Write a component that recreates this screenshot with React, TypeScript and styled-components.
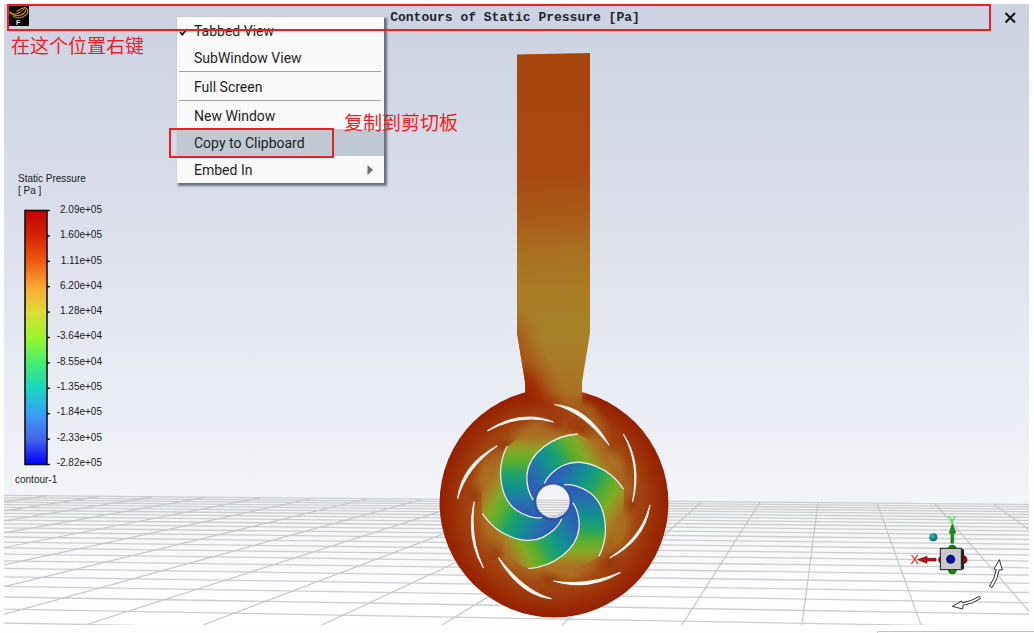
import React from 'react';
import styled, { createGlobalStyle } from 'styled-components';

const RED = '#ee1c25';
const UI_FONT = 'Roboto, "Noto Sans", sans-serif';
const CJK_FONT = '"Noto Sans CJK SC", sans-serif';

const GlobalStyle = createGlobalStyle`
  *, *::before, *::after { box-sizing: border-box; }
  body { margin: 0; background: #ffffff; }
`;

const Page = styled.div`
  display: flex;
  flex-direction: column;
  min-height: 100vh;
  padding-top: 4px;
  background: #fefefe;
`;

const Viewport = styled.main`
  position: relative;
  display: flex;
  flex: 1;
  flex-direction: column;
  margin: 0 5px 0 4px;
  background: linear-gradient(#ccd2e2 0%, #d9dde9 30%, #e9ebf3 60%, #f3f4f9 80%, #fafafd 90%, #ffffff 98%);
`;

const SceneSvg = styled.svg`
  position: absolute;
  inset: 0;
  width: 100%;
  height: 100%;
`;

const TitleRow = styled.header`
  display: flex;
  height: 27px;
  padding-left: 3px;
`;

const TitleStrip = styled.div`
  position: relative;
  z-index: 3;
  display: flex;
  flex: 1;
  align-items: center;
  gap: 12px;
  border: 2px solid ${RED};
  pointer-events: none;
`;

const AppLogo = styled.svg`
  width: 20px;
  height: 20px;
  align-self: flex-start;
`;

const Title = styled.h1`
  flex: 1;
  margin: 0;
  color: #20262e;
  font: bold 13px/20px "Liberation Mono", monospace;
  text-align: center;
`;

const CloseButton = styled.button`
  position: relative;
  display: flex;
  width: 38px;
  align-items: center;
  justify-content: center;
  padding: 0;
  border: 0;
  background: transparent;
`;

const Note = styled.p<{ $left: number; $top: number }>`
  position: absolute;
  z-index: 4;
  left: ${(p) => p.$left}px;
  top: ${(p) => p.$top}px;
  margin: 0;
  color: ${RED};
  font: 19px/28px ${CJK_FONT};
  white-space: nowrap;
`;

const Menu = styled.div`
  position: absolute;
  z-index: 2;
  left: 173px;
  top: 13px;
  width: 207px;
  background: #f9f9f9;
  box-shadow: 2px 2px 2px 1px rgba(70, 78, 92, 0.75);
`;

const MenuItem = styled.button<{ $active?: boolean }>`
  position: relative;
  display: flex;
  width: 100%;
  height: 27px;
  align-items: center;
  padding: 0 11px 0 17px;
  border: 0;
  background: ${(p) => (p.$active ? '#bfc9d3' : 'transparent')};
  color: #1e1e1e;
  font: 14px/20px ${UI_FONT};
  text-align: left;
`;

const MenuLabel = styled.span`
  flex: 1;
`;

const CheckIcon = styled.svg`
  position: absolute;
  left: 2px;
  top: 11px;
  width: 9px;
  height: 8px;
`;

const Separator = styled.hr`
  height: 2px;
  margin: 0 3px 0 2px;
  border: 0;
  border-top: 1px solid #a2a2a2;
`;

const Highlight = styled.span`
  position: absolute;
  left: -8px;
  top: -1px;
  width: 165px;
  height: 30px;
  border: 2px solid ${RED};
`;

const Legend = styled.section`
  position: relative;
  display: flex;
  flex-direction: column;
  width: 112px;
  margin-top: 142px;
  padding-left: 11px;
  color: #1a1a1a;
  font: 10px/12px "Liberation Sans", sans-serif;
`;

const LegendTitle = styled.div`
  padding-left: 3px;
  white-space: pre-line;
`;

const Scale = styled.div`
  display: flex;
  justify-content: space-between;
  margin: 7px 14px 5px 9px;
`;

const Bar = styled.svg`
  width: 26px;
  height: 257px;
  margin-top: 5px;
`;

const Values = styled.ol`
  display: flex;
  height: 265px;
  flex-direction: column;
  justify-content: space-between;
  margin: 0;
  padding: 0;
  list-style: none;
  text-align: right;
`;

const Triad = styled.svg`
  position: absolute;
  right: 19px;
  bottom: 12px;
  width: 110px;
  height: 100px;
`;

const Footer = styled.footer`
  display: flex;
  height: 8px;
  align-items: flex-end;
  justify-content: flex-end;
`;

const PanelEdge = styled.div`
  width: 157px;
  height: 2px;
  border-top: 1px solid #b9c3cd;
  border-left: 1px solid #b9c3cd;
  border-top-left-radius: 3px;
`;

const legendValues = [
  '2.09e+05', '1.60e+05', '1.11e+05', '6.20e+04', '1.28e+04', '-3.64e+04',
  '-8.55e+04', '-1.35e+05', '-1.84e+05', '-2.33e+05', '-2.82e+05',
];

const legendColors = [
  '#c40000', '#d62200', '#ee5a10', '#fda733', '#dcdc38', '#9bf52c',
  '#45ee72', '#16d6c0', '#3aa0f8', '#4466ea', '#0000ff',
];

/* Floor lines running across the view, nearest first. */
const crossLines = Array.from({ length: 24 }, (_, n) => {
  const y = 420 + 1 / (1 / 203 + n * 0.000362);
  const slope = 0.0088 + (y - 495.5) * 0.000079;
  return { y1: y, y2: y + slope * 1025 };
});

/* Floor lines running towards the horizon: [x at horizon, x at bottom edge]. */
const depthLines: [number, number][] = [
  [47, -875], [100, -755], [152, -635], [205, -515], [260, -395], [313, -275], [367, -155],
  [422, -35], [477, 85], [532, 203], [588, 322], [645, 442], [702, 562], [760, 682],
  [818, 802], [877, 921], [935, 1041], [994, 1160],
];

const blade = 'M24.7 -67.3 C0 -66 -24 -48 -26 -27 C-27 -17 -24 -7 -19.7 -1.3';
const passage =
  'M24.7 -67.3 C0 -66 -24 -48 -26 -27 C-27 -17 -24 -7 -19.7 -1.3 A19.7 19.7 0 0 1 -8.7 -17.7 ' +
  'C-5.9 -24.3 1.2 -31.9 10.4 -36.9 C29.6 -44.8 57.2 -33 70.6 -12.3 C66 -36 49 -57 24.7 -67.3 Z';

const vanes = [
  'M172 153 Q270 86 370 126 Q270 98 172 153',
  'M373 73 Q470 80 537 195 Q460 95 373 73',
  'M580 162 Q637 250 608 364 Q630 250 580 162',
  'M660 375 Q645 480 540 533 Q634 475 660 375',
  'M370 603 Q474 634 570 578 Q474 620 370 603',
  'M205 533 Q270 645 363 656 Q283 634 205 533',
  'M133 365 Q107 475 160 563 Q118 475 133 365',
  'M202 197 Q95 255 83 355 Q108 263 202 197',
];

/* Warm and dark spots of the pressure field: [x, y, rx, ry, angle]. */
const warmSpots: number[][] = [
  [172, 285, 24, 50, 15], [325, 150, 44, 20, -8], [510, 195, 40, 24, 25], [548, 250, 22, 44, -20],
  [565, 450, 20, 50, 12], [410, 575, 48, 20, -5], [232, 525, 34, 20, 30], [445, 82, 66, 18, 20],
  [190, 430, 22, 45, -10], [350, 560, 45, 18, 0], [275, 175, 34, 18, -25], [425, 30, 40, 26, 10],
  [540, 400, 18, 60, 0], [500, 130, 40, 14, 40],
];
const darkSpots: number[][] = [
  [372, 130, 26, 13, 10], [542, 198, 20, 14, 30], [605, 375, 14, 24, 0], [535, 545, 30, 16, -25],
  [362, 600, 36, 12, 10], [200, 522, 18, 18, 0], [135, 350, 12, 24, 0], [225, 195, 26, 15, -10],
  [440, 145, 40, 12, 15],
];

const turns = [0, 60, 120, 180, 240, 300];

function Scene() {
  return (
    <SceneSvg viewBox="4 4 1025 621" preserveAspectRatio="xMidYMax slice" aria-hidden="true">
      <defs>
        <linearGradient id="pipe" gradientUnits="userSpaceOnUse" x1="545" y1="54" x2="556" y2="392">
          <stop offset="0" stopColor="#a6450e" />
          <stop offset="0.36" stopColor="#a84a11" />
          <stop offset="0.48" stopColor="#a95a19" />
          <stop offset="0.6" stopColor="#a97322" />
          <stop offset="0.72" stopColor="#a87e25" />
          <stop offset="0.84" stopColor="#a78127" />
          <stop offset="1" stopColor="#aa7223" />
        </linearGradient>
        <radialGradient id="neckHeat" gradientUnits="userSpaceOnUse" cx="0" cy="0" r="1"
          gradientTransform="translate(522 396) rotate(62) scale(62 44)">
          <stop offset="0" stopColor="#952000" />
          <stop offset="0.4" stopColor="#a03308" />
          <stop offset="1" stopColor="#a8601d" stopOpacity="0" />
        </radialGradient>
        <radialGradient id="cornerHeat" gradientUnits="userSpaceOnUse" cx="0" cy="0" r="1"
          gradientTransform="translate(514 345) rotate(72) scale(50 30)">
          <stop offset="0" stopColor="#a84a14" />
          <stop offset="1" stopColor="#a8601d" stopOpacity="0" />
        </radialGradient>
        <linearGradient id="neckFade" gradientUnits="userSpaceOnUse" x1="0" y1="392" x2="0" y2="408">
          <stop offset="0" stopColor="#fff" />
          <stop offset="1" stopColor="#000" />
        </linearGradient>
        <mask id="pipeMask" maskUnits="userSpaceOnUse" x="500" y="40" width="110" height="380">
          <rect x="500" y="40" width="110" height="380" fill="url(#neckFade)" />
        </mask>
        <radialGradient id="volute" gradientUnits="userSpaceOnUse" cx="554" cy="503" r="115">
          <stop offset="0.5" stopColor="#a9701f" />
          <stop offset="0.64" stopColor="#a8611d" />
          <stop offset="0.76" stopColor="#a2410f" />
          <stop offset="0.88" stopColor="#9c2f06" />
          <stop offset="1" stopColor="#941f00" />
        </radialGradient>
        <linearGradient id="flow" gradientUnits="userSpaceOnUse" x1="-18" y1="10" x2="70" y2="-40">
          <stop offset="0" stopColor="#2c55b4" />
          <stop offset="0.15" stopColor="#2a68b2" />
          <stop offset="0.26" stopColor="#1c80a0" />
          <stop offset="0.35" stopColor="#11938c" />
          <stop offset="0.47" stopColor="#20a468" />
          <stop offset="0.6" stopColor="#5cae2c" />
          <stop offset="0.69" stopColor="#80aa26" />
          <stop offset="0.76" stopColor="#9c9024" />
          <stop offset="0.83" stopColor="#a87622" />
          <stop offset="0.9" stopColor="#a8661f" stopOpacity="0" />
        </linearGradient>
        <filter id="soft" x="-60%" y="-60%" width="220%" height="220%">
          <feGaussianBlur stdDeviation="12" />
        </filter>
        <mask id="eye">
          <rect x="400" y="360" width="300" height="270" fill="#fff" />
          <circle cx="553" cy="501.3" r="16.7" fill="#000" />
        </mask>
        <clipPath id="disc"><circle cx="554" cy="503" r="114.4" /></clipPath>
      </defs>

      <g stroke="#cdcdcd">
        {crossLines.map((l) => (
          <line key={l.y1} x1="4" y1={l.y1} x2="1029" y2={l.y2} strokeWidth="1.3" />
        ))}
        {depthLines.map(([top, bottom]) => (
          <line key={top} x1={top} y1={495.5 + top * 0.0088} x2={bottom} y2="625" strokeWidth="1.2" stroke="#c6c6c6" />
        ))}
      </g>

      <g mask="url(#eye)">
        <circle cx="554" cy="503" r="114.4" fill="url(#volute)" />
        <g clipPath="url(#disc)">
          <g transform="translate(430 380) scale(.33333)">
            {warmSpots.map(([x, y, rx, ry, a]) => (
              <ellipse key={`${x}-${y}`} rx={rx} ry={ry} fill="#ad7626" opacity="0.8" filter="url(#soft)"
                transform={`translate(${x} ${y}) rotate(${a})`} />
            ))}
            {darkSpots.map(([x, y, rx, ry, a]) => (
              <ellipse key={`${x}-${y}`} rx={rx} ry={ry} fill="#8f2200" opacity="0.7" filter="url(#soft)"
                transform={`translate(${x} ${y}) rotate(${a})`} />
            ))}
          </g>
        </g>
        <g transform="translate(553 501.3)">
          <circle r="20" fill="#2c58b4" />
          {turns.map((a) => (
            <path key={a} d={passage} fill="url(#flow)" transform={`rotate(${a})`} />
          ))}
          {turns.map((a) => (
            <path key={a} d={blade} fill="none" stroke="#e6ece6" strokeWidth="1.3" transform={`rotate(${a})`} />
          ))}
        </g>
        <g transform="translate(430 380) scale(.33333)" fill="#fafafa" stroke="#f4f1ee" strokeWidth="3.6" strokeLinejoin="round">
          {vanes.map((d) => <path key={d} d={d} />)}
        </g>
      </g>

      <g mask="url(#pipeMask)">
        <path d="M517 54.5 L590 53 V333 L582 382 V410 H525 V382 L517 333 Z" fill="url(#pipe)" />
        <path d="M517 290 H560 L582 382 V410 H525 V382 L517 333 Z" fill="url(#cornerHeat)" />
        <path d="M517 333 H590 L582 382 V410 H525 V382 Z" fill="url(#neckHeat)" />
      </g>
    </SceneSvg>
  );
}

function ColorBar() {
  return (
    <Bar viewBox="0 0 26 257" aria-hidden="true">
      <defs>
        <linearGradient id="scale" x1="0" y1="0" x2="0" y2="1">
          {legendColors.map((c, i) => <stop key={c} offset={i / 10} stopColor={c} />)}
        </linearGradient>
      </defs>
      <rect x="1" y="1.5" width="22" height="254" fill="url(#scale)" stroke="#101010" strokeWidth="1.6" />
      {legendColors.map((c, i) => (
        <line key={c} x1="23" x2="26" y1={1.5 + i * 25.4} y2={1.5 + i * 25.4} stroke="#101010" strokeWidth="1.4" />
      ))}
    </Bar>
  );
}

function AxisTriad() {
  return (
    <Triad viewBox="30 39 330 300" role="img" aria-label="Axis triad">
      <defs>
        <radialGradient id="green"><stop offset="0" stopColor="#16b016" /><stop offset="1" stopColor="#086808" /></radialGradient>
        <radialGradient id="red"><stop offset="0" stopColor="#e01818" /><stop offset="1" stopColor="#780000" /></radialGradient>
        <radialGradient id="blue"><stop offset="0" stopColor="#1818c8" /><stop offset="1" stopColor="#000070" /></radialGradient>
        <radialGradient id="teal" cx="0.4" cy="0.35"><stop offset="0" stopColor="#30c8c8" /><stop offset="1" stopColor="#067074" /></radialGradient>
      </defs>
      <circle cx="130" cy="112" r="12" fill="url(#teal)" />
      <circle cx="187" cy="147" r="13" fill="url(#green)" />
      <circle cx="187" cy="210" r="13" fill="url(#green)" />
      <circle cx="219" cy="179" r="13" fill="url(#red)" />
      <circle cx="155" cy="179" r="10" fill="url(#red)" />
      <path d="M183 129 V99 H178 L187 71 L197 99 H191 V129 Z" fill="#129512" stroke="#0a5a0a" strokeWidth="2" />
      <path d="M138 175 H111 V169 L83 179 L111 190 V183 H138 Z" fill="#b01414" stroke="#6c0808" strokeWidth="2" />
      <path d="M214 145 L222 149 V207 L214 210 Z" fill="#222" />
      <rect x="151" y="145" width="63" height="64" fill="#c9c9c9" stroke="#1c1c1c" strokeWidth="3" />
      <circle cx="182" cy="178" r="13.5" fill="url(#blue)" />
      <text x="186" y="76" fontSize="36" textAnchor="middle" fill="#10ee10" fontFamily="Liberation Sans, sans-serif">Y</text>
      <text x="74" y="193" fontSize="38" textAnchor="middle" fill="#f01010" fontFamily="Liberation Sans, sans-serif">X</text>
      <g fill="#fdfdfd" stroke="#333" strokeWidth="3" strokeLinejoin="round">
        <path d="M298 259 Q315 234 319 209 L312 207 L328 179 L337 210 L328 209 Q323 238 306 263 Z" />
        <path d="M268 289 Q245 303 217 309 L215 303 L187 319 L218 327 L219 316 Q248 311 272 296 Z" />
      </g>
    </Triad>
  );
}

export default function App() {
  return (
    <Page>
      <GlobalStyle />
      <Viewport>
        <Scene />
        <TitleRow>
          <TitleStrip>
            <AppLogo viewBox="0 0 20 20" aria-hidden="true">
              <rect width="20" height="20" fill="#050505" />
              <g fill="none" stroke="#c58a1e" strokeWidth="1.2" strokeLinecap="round">
                <path d="M0.5 6 Q5 9.5 9.5 7 Q15 4 15.5 1.5" />
                <path d="M1 6.5 Q4 10.5 10 9.5 Q16 8 17 4" />
                <path d="M4.5 10.5 Q9 13 13.5 11 Q20 8 18.5 4 Q18 2.5 16 1.5" />
                <path d="M8 5.5 Q12 2 16 1.5" />
              </g>
              <text x="7" y="19" fontSize="7" fontWeight="bold" fill="#e8e8e8" fontFamily="Liberation Sans, sans-serif">F</text>
            </AppLogo>
            <Title>Contours of Static Pressure [Pa]</Title>
          </TitleStrip>
          <CloseButton type="button" aria-label="Close">
            <svg width="12" height="12" viewBox="0 0 12 12" aria-hidden="true">
              <path d="M1.5 1 L11 10.5 M11 1 L1.5 10.5" stroke="#111" strokeWidth="2" />
            </svg>
          </CloseButton>
        </TitleRow>

        <Legend aria-label="Static pressure legend">
          <LegendTitle>{'Static Pressure\n[ Pa ]'}</LegendTitle>
          <Scale>
            <ColorBar />
            <Values>
              {legendValues.map((v) => <li key={v}>{v}</li>)}
            </Values>
          </Scale>
          <div>contour-1</div>
        </Legend>

        <Menu role="menu">
          <MenuItem type="button" role="menuitem">
            <CheckIcon viewBox="0 0 9 8" aria-hidden="true">
              <path d="M1 4 L3.3 6.6 L8 1" fill="none" stroke="#111" strokeWidth="1.7" />
            </CheckIcon>
            <MenuLabel>Tabbed View</MenuLabel>
          </MenuItem>
          <MenuItem type="button" role="menuitem"><MenuLabel>SubWindow View</MenuLabel></MenuItem>
          <Separator />
          <MenuItem type="button" role="menuitem"><MenuLabel>Full Screen</MenuLabel></MenuItem>
          <Separator />
          <MenuItem type="button" role="menuitem"><MenuLabel>New Window</MenuLabel></MenuItem>
          <MenuItem type="button" role="menuitem" $active>
            <MenuLabel>Copy to Clipboard</MenuLabel>
            <Highlight />
          </MenuItem>
          <MenuItem type="button" role="menuitem">
            <MenuLabel>Embed In</MenuLabel>
            <svg width="6" height="10" viewBox="0 0 6 10" aria-hidden="true"><path d="M0.5 0 L6 5 L0.5 10 Z" fill="#6e6e6e" /></svg>
          </MenuItem>
        </Menu>

        <Note $left={7} $top={27}>在这个位置右键</Note>
        <Note $left={340} $top={104}>复制到剪切板</Note>
        <AxisTriad />
      </Viewport>
      <Footer><PanelEdge /></Footer>
    </Page>
  );
}
